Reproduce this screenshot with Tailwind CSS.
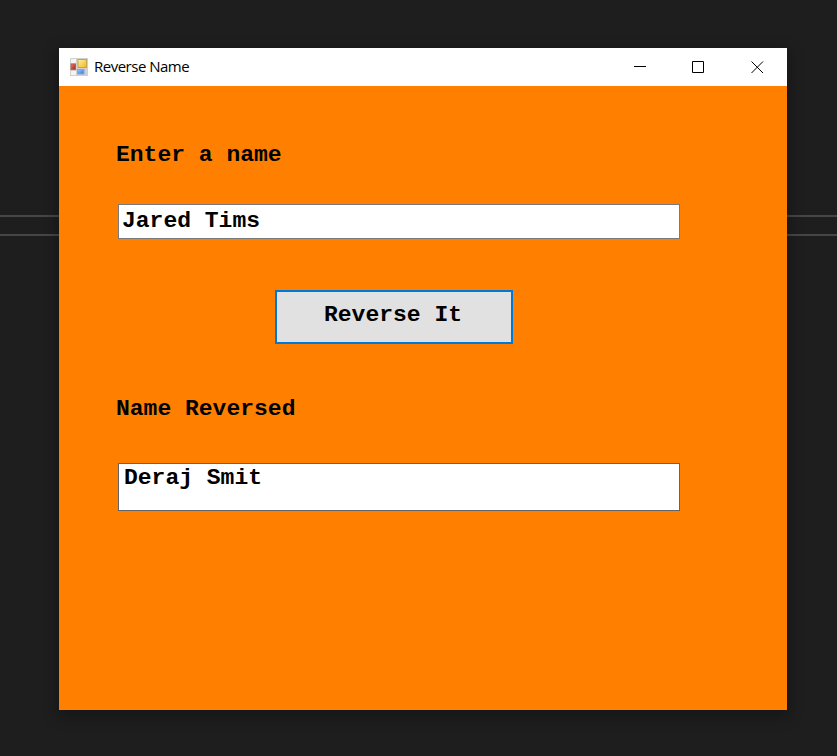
<!DOCTYPE html>
<html lang="en">
<head>
<meta charset="utf-8">
<title>Reverse Name</title>
<script src="https://cdn.jsdelivr.net/npm/@tailwindcss/browser@4"></script>
</head>
<body class="bg-[#1e1e1e]">
<div class="relative h-[756px] w-[837px] overflow-hidden px-[59px] pt-12">
  <div class="absolute left-0 top-[215px] h-[21px] w-full border-y-2 border-[#464646]"></div>
  <main class="relative flex h-[662px] w-[728px] flex-col bg-[#ff8000] shadow-[0_4px_14px_2px_rgba(0,0,0,0.3)]">
    <header class="flex h-[38px] shrink-0 items-center bg-white pl-[11px] pr-[23px]">
      <svg class="h-[18px] w-[18px]" viewBox="0 0 18 18">
        <defs>
          <linearGradient id="gold" x1="0" y1="0" x2="1" y2="1"><stop offset="0" stop-color="#fff0a0"/><stop offset="1" stop-color="#f0b81c"/></linearGradient>
          <linearGradient id="blue" x1="0" y1="0" x2="1" y2="1"><stop offset="0" stop-color="#9cc4fa"/><stop offset="1" stop-color="#3976d8"/></linearGradient>
          <linearGradient id="red" x1="0" y1="0" x2="1" y2="1"><stop offset="0" stop-color="#e08070"/><stop offset="1" stop-color="#a81c18"/></linearGradient>
        </defs>
        <rect width="18" height="18" fill="#d0d0d0"/>
        <path d="M1 1h5v4H1zM1 13h5v4H1z" fill="#f4f4f4"/>
        <rect x="8" y="1.5" width="8.5" height="8" fill="url(#gold)" stroke="#c9a545"/>
        <rect x="1" y="6" width="4.5" height="5.5" fill="url(#red)" stroke="#b86055"/>
        <rect x="7.5" y="11.5" width="6.5" height="4.5" fill="url(#blue)" stroke="#84a8de"/>
      </svg>
      <h1 class="ml-[6px] -mt-[2px] font-['Open_Sans',sans-serif] text-[15px] leading-5 tracking-[-0.5px] text-black">Reverse Name</h1>
      <div class="ml-auto flex gap-[46px]">
        <svg class="h-[13px] w-[13px]" viewBox="0 0 13 13" fill="none" stroke="#000"><path d="M1 5.500h12"/></svg>
        <svg class="h-[13px] w-[13px]" viewBox="0 0 13 13" fill="none" stroke="#000"><path d="M.5 .5h11v11H.5z"/></svg>
        <svg class="h-[13px] w-[13px]" viewBox="0 0 13 13" fill="none" stroke="#000"><path d="M.5 .5l11.500 11.500M12 .5L.5 12"/></svg>
      </div>
    </header>
    <section class="flex flex-col pl-[59px] pt-[56px] font-['Liberation_Mono',monospace] text-[23px] font-bold leading-[26px] text-black">
      <label class="-ml-[2px] origin-bottom-left scale-y-[0.93]">Enter a name</label>
      <div class="mt-[36px] h-[35px] w-[562px] border border-[#7a7a7a] bg-white pl-[3px] pt-[3px]"><span class="block origin-bottom-left scale-y-[0.93]">Jared Tims</span></div>
      <button class="ml-[157px] mt-[51px] flex h-[54px] w-[238px] items-start border-2 border-[#0078d7] bg-[#e1e1e1] pl-[47px] pt-[10px]"><span class="block origin-bottom-left scale-y-[0.93]">Reverse It</span></button>
      <div class="-ml-[2px] mt-[52px] origin-bottom-left scale-y-[0.93]">Name Reversed</div>
      <div class="mt-[41px] h-[48px] w-[562px] border border-[#646464] bg-white pl-[5px] pt-px"><span class="block origin-bottom-left scale-y-[0.93]">Deraj Smit</span></div>
    </section>
  </main>
</div>
</body>
</html>
